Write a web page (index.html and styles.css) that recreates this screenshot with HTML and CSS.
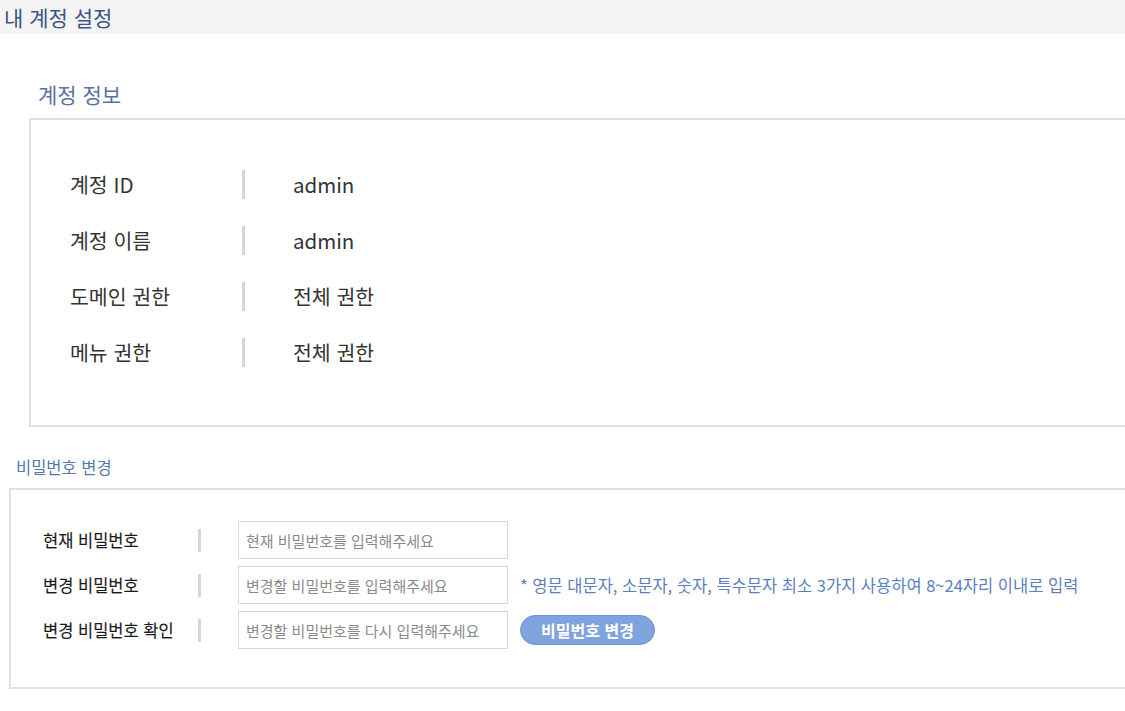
FILE: index.html
```html
<!DOCTYPE html>
<html lang="ko">
<head>
<meta charset="utf-8">
<title>내 계정 설정</title>
<link rel="stylesheet" href="styles.css">
</head>
<body>
<div class="page">
  <header class="topbar"><h1 class="page-title">내 계정 설정</h1></header>

  <section class="info-section">
    <h2 class="section-title">계정 정보</h2>
    <div class="info-box">
      <div class="info-row"><span class="info-label">계정 ID</span><span class="bar"></span><span class="info-value">admin</span></div>
      <div class="info-row"><span class="info-label">계정 이름</span><span class="bar"></span><span class="info-value">admin</span></div>
      <div class="info-row"><span class="info-label">도메인 권한</span><span class="bar"></span><span class="info-value">전체 권한</span></div>
      <div class="info-row"><span class="info-label">메뉴 권한</span><span class="bar"></span><span class="info-value">전체 권한</span></div>
    </div>
  </section>

  <section class="pw-section">
    <h2 class="pw-title">비밀번호 변경</h2>
    <div class="pw-box">
      <div class="pw-row">
        <span class="pw-label">현재 비밀번호</span><span class="pw-bar"></span>
        <input class="pw-input" type="password" placeholder="현재 비밀번호를 입력해주세요">
      </div>
      <div class="pw-row">
        <span class="pw-label">변경 비밀번호</span><span class="pw-bar"></span>
        <input class="pw-input" type="password" placeholder="변경할 비밀번호를 입력해주세요">
        <span class="pw-note">* 영문 대문자, 소문자, 숫자, 특수문자 최소 3가지 사용하여 8~24자리 이내로 입력</span>
      </div>
      <div class="pw-row">
        <span class="pw-label">변경 비밀번호 확인</span><span class="pw-bar"></span>
        <input class="pw-input" type="password" placeholder="변경할 비밀번호를 다시 입력해주세요">
        <button class="pw-btn" type="button">비밀번호 변경</button>
      </div>
    </div>
  </section>
</div>
</body>
</html>
```
FILE: styles.css
```css
html, body {
  margin: 0;
  padding: 0;
  background: #ffffff;
  overflow: hidden;
}
body {
  font-family: "Malgun Gothic", "Noto Sans CJK KR", "Noto Sans", sans-serif;
  color: #333333;
}
.page {
  width: 1125px;
  overflow: hidden;
}
.topbar {
  height: 34px;
  background: #f4f4f4;
  display: flex;
  align-items: center;
  padding-left: 4px;
}
.page-title {
  margin: 0;
  font-size: 21px;
  font-weight: 400;
  line-height: 34px;
  color: #3b5487;
}
.info-section {
  padding-left: 29px;
}
.section-title {
  margin: 0;
  padding-top: 46px;
  padding-left: 9px;
  height: 38px;
  font-size: 21px;
  font-weight: 400;
  line-height: 28px;
  color: #5a72a0;
}
.info-box {
  width: 1120px;
  height: 309px;
  box-sizing: border-box;
  border: 2px solid #e0e0e0;
  padding: 36px 0 0 39px;
}
.info-row {
  display: flex;
  align-items: center;
  height: 56px;
}
.info-label {
  width: 172px;
  font-size: 20.5px;
  line-height: 28px;
  color: #333333;
}
.bar {
  width: 3px;
  height: 29px;
  background: #d6d6d6;
}
.info-value {
  margin-left: 48px;
  font-size: 20.5px;
  line-height: 28px;
  color: #333333;
}
.pw-section {
  padding-left: 9px;
}
.pw-title {
  margin: 0;
  padding-top: 29px;
  padding-left: 7px;
  height: 32px;
  font-size: 16.5px;
  font-weight: 400;
  line-height: 22px;
  color: #5877b0;
}
.pw-box {
  width: 1140px;
  height: 201px;
  box-sizing: border-box;
  border: 2px solid #e0e0e0;
  padding: 31px 0 0 32px;
  display: flex;
  flex-direction: column;
  gap: 7px;
}
.pw-row {
  display: flex;
  align-items: center;
  height: 38px;
}
.pw-label {
  width: 155px;
  font-size: 16.5px;
  font-weight: 400;
  line-height: 22px;
  color: #1a1a1a;
  -webkit-text-stroke: 0.15px #1a1a1a;
}
.pw-bar {
  width: 3px;
  height: 23px;
  background: #d6d6d6;
}
.pw-input {
  margin-left: 37px;
  width: 270px;
  height: 38px;
  box-sizing: border-box;
  border: 1px solid #d8d8d8;
  padding: 0 7px;
  font-family: inherit;
  font-size: 15px;
  color: #333;
  outline: none;
}
.pw-input::placeholder {
  color: #8a8a8a;
}
.pw-note {
  margin-left: 12px;
  font-size: 16.5px;
  line-height: 22px;
  color: #5b7fc0;
}
.pw-btn {
  margin-left: 12px;
  width: 135px;
  height: 30px;
  border: 1px solid #6e93d0;
  border-radius: 15px;
  background: #7fa3dc;
  color: #ffffff;
  font-family: inherit;
  font-size: 16px;
  font-weight: 700;
  padding: 0;
  cursor: pointer;
}
```
